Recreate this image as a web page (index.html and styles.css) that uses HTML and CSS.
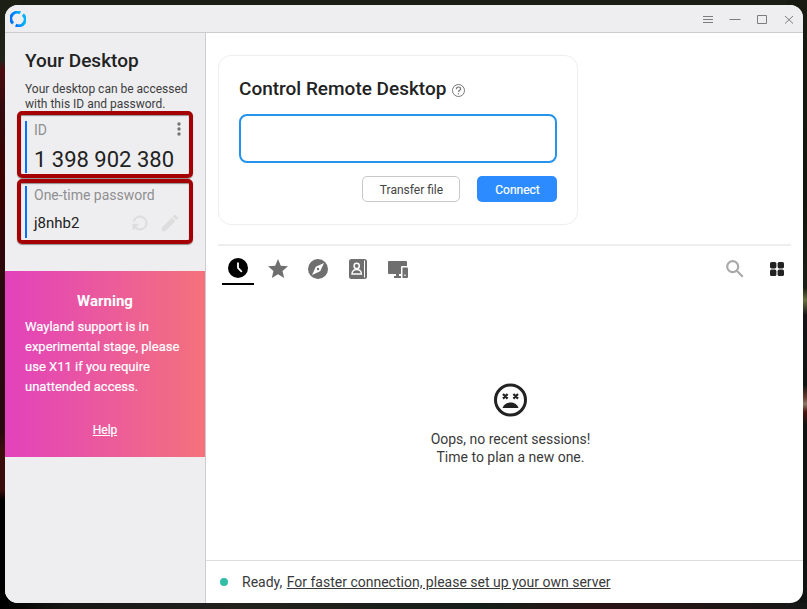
FILE: index.html
```html
<!DOCTYPE html>
<html lang="en">
<head>
<meta charset="utf-8">
<title>RustDesk</title>
<link rel="stylesheet" href="styles.css">
</head>
<body>
<div class="window">
  <header class="titlebar">
    <svg class="logo" width="16" height="16" viewBox="0 0 18 18" fill="none" stroke-width="3.4">
      <defs><linearGradient id="lg" x1="0" y1="0" x2="1" y2="0"><stop offset="0" stop-color="#0071ff"/><stop offset="1" stop-color="#00b8fa"/></linearGradient></defs>
      <path d="M3.500 14A7.200 7.200 0 0 1 11.600 2.200" stroke="url(#lg)"/>
      <path d="M14.500 4A7.200 7.200 0 0 1 6.400 15.800" stroke="url(#lg)"/>
    </svg>
    <nav class="controls">
      <svg viewBox="0 0 12 12"><path d="M1 2.500h10M1 5.500h10M1 8.500h10"/></svg>
      <svg viewBox="0 0 12 12"><path d="M.5 5.500h11"/></svg>
      <svg viewBox="0 0 12 12"><path d="M1.500 1.500h9v8h-9z"/></svg>
      <svg viewBox="0 0 12 12"><path d="M2 2l8 7.500M10 2l-8 7.500"/></svg>
    </nav>
  </header>
  <div class="body">
    <aside class="sidebar">
      <h1>Your Desktop</h1>
      <p class="intro">Your desktop can be accessed<br>with this ID and password.</p>
      <section class="box id-box">
        <div class="field">
          <div class="label">ID</div>
          <div class="id">1 398 902 380</div>
        </div>
        <svg class="dots" width="4" height="14" viewBox="0 0 4 14" fill="#747476"><circle cx="2" cy="2" r="1.700"/><circle cx="2" cy="7" r="1.700"/><circle cx="2" cy="12" r="1.700"/></svg>
      </section>
      <section class="box pw-box">
        <div class="field">
          <div class="label">One-time password</div>
          <div class="pw"><span>j8nhb2</span>
            <svg width="22" height="22" viewBox="0 0 24 24"><path fill="#ddd" stroke="#ddd" stroke-width=".4" transform="rotate(180 12 12)" d="M17.650 6.350A7.960 7.960 0 0 0 12 4a8 8 0 1 0 7.730 10h-2.080A6 6 0 1 1 12 6c1.660 0 3.140.690 4.220 1.780L13 11h7V4z"/></svg>
            <svg width="22" height="22" viewBox="0 0 24 24"><path fill="#ddd" d="M3 17.250V21h3.750L17.810 9.940l-3.750-3.750zM20.710 7.040a1 1 0 0 0 0-1.410l-2.340-2.340a1 1 0 0 0-1.410 0l-1.830 1.830 3.750 3.750z"/></svg>
          </div>
        </div>
      </section>
      <section class="warning">
        <h2>Warning</h2>
        <p>Wayland support is in<br>experimental stage, please<br>use X11 if you require<br>unattended access.</p>
        <a>Help</a>
      </section>
    </aside>
    <main>
      <section class="card">
        <h1>Control Remote Desktop
          <svg width="15" height="15" viewBox="0 0 15 15" fill="none" stroke="#777"><circle cx="7.500" cy="7.500" r="6"/><path stroke-width="1.200" d="M5.400 6.200C5.400 3.200 9.600 3.400 9.600 5.900C9.600 7.300 7.500 7.400 7.500 9M7.500 10.200v1.300"/></svg>
        </h1>
        <div class="input"></div>
        <div class="actions"><span class="btn transfer">Transfer file</span><span class="btn connect">Connect</span></div>
      </section>
      <div class="tabs">
        <div class="tab active"><svg width="20" height="20" viewBox="0 0 20 20"><circle cx="10" cy="10" r="10"/><path d="M10 4.500V10l3.800 3.800" fill="none" stroke="#fff" stroke-width="1.800"/></svg></div>
        <div class="tab"><svg width="24" height="24" viewBox="0 0 24 24"><path d="M12 17.270L18.180 21l-1.640-7.030L22 9.240l-7.190-.610L12 2 9.190 8.630 2 9.240l5.460 4.730L5.820 21z"/></svg></div>
        <div class="tab"><svg width="24" height="24" viewBox="0 0 24 24"><circle cx="12" cy="12" r="10"/><path fill="#fff" d="M18 6l-3.800 8.200L6 18l3.800-8.200z"/><circle cx="12" cy="12" r="1.200"/></svg></div>
        <div class="tab"><svg width="20" height="20" viewBox="0 0 20 20"><rect x="1" y="0" width="18" height="20" rx="2.500"/><path d="M16.500 1.500v17" stroke="#fff" stroke-width="1"/><g fill="none" stroke="#fff" stroke-width="1.500"><circle cx="8.700" cy="6.900" r="2.600"/><path d="M4 15c0-6 9.400-6 9.400 0z"/></g></svg></div>
        <div class="tab"><svg width="22" height="20" viewBox="0 0 22 20"><path d="M2 2h17a1 1 0 0 1 1 1v4h-5a1 1 0 0 0-1 1v7H2a1 1 0 0 1-1-1V3a1 1 0 0 1 1-1zM9 15h3v2h2v2H7v-2h2z"/><path d="M15.500 8.500H20a1 1 0 0 1 1 1V18a1 1 0 0 1-1 1h-4.500z"/><circle cx="18" cy="16.300" r=".8" fill="#fff"/></svg></div>
        <div class="tools">
          <svg width="18" height="18" viewBox="0 0 18 18" fill="none" stroke="#aaa" stroke-width="2.200"><circle cx="6.700" cy="6.700" r="5.500"/><path d="M10.800 10.800l6 6"/></svg>
          <svg width="14" height="14" viewBox="0 0 14 14" fill="#222"><rect width="6.400" height="6.400" rx="1.600"/><rect x="7.600" width="6.400" height="6.400" rx="1.600"/><rect y="7.600" width="6.400" height="6.400" rx="1.600"/><rect x="7.600" y="7.600" width="6.400" height="6.400" rx="1.600"/></svg>
        </div>
      </div>
      <div class="empty">
        <svg width="34" height="34" viewBox="0 0 34 34" fill="none" stroke="#222"><circle cx="16.500" cy="17" r="15" stroke-width="3"/><path stroke-width="2.200" d="M9 11l4.600 4.600M13.600 11l-4.600 4.600M19.400 11l4.600 4.600M24 11l-4.600 4.600"/><path fill="#222" stroke="none" d="M8.500 25c2.200-7.300 13.800-7.300 16 0z"/></svg>
        <p>Oops, no recent sessions!<br>Time to plan a new one.</p>
      </div>
      <footer><i class="dot"></i><span>Ready, <u>For faster connection, please set up your own server</u></span></footer>
    </main>
  </div>
</div>
</body>
</html>
```
FILE: styles.css
```css
* { box-sizing: border-box; }
body {
  margin: 0;
  height: 609px;
  padding: 5px 4px 6px 5px;
  overflow: hidden;
  font-family: Roboto, sans-serif;
  color: #222;
  background:
    linear-gradient(90deg, #000 0, #171612 8%, #22211d 30%, #151d18 60%, #291314 75%, #171717 100%) 0 100% / 100% 6px no-repeat,
    linear-gradient(#1c1f14 0, #20231a 60px, #4b0b10 70px, #330b0d 110px, #3c0000 180px, #2a090c 280px, #26080b 430px, #3a0c0c 450px, #3a0c0c 490px, #000 500px) 0 0 / 20px 100% no-repeat,
    linear-gradient(#171b12 0, #12150d 200px, #1b1f13 288px, #6a7040 300px, #171317 315px, #101312 385px, #6a3c30 398px, #8a7868 404px, #4a1410 412px, #101312 425px, #101312 609px) 100% 0 / 20px 100% no-repeat,
    #1b1e15;
}
h1, h2, p { margin: 0; }
svg { display: block; flex: none; }
.window { height: 598px; border-radius: 13px; overflow: hidden; background: #fff; display: flex; flex-direction: column; }
.titlebar { height: 28px; flex: none; background: #eeeef0; border-bottom: 1px solid #cdcdcf; display: flex; justify-content: space-between; align-items: center; padding: 0 8px 0 5px; }
.controls { display: flex; gap: 15px; padding-top: 2px; }
.controls svg { width: 12px; height: 12px; fill: none; stroke: #7c7c7e; stroke-width: 1; }
.body { display: flex; flex: 1; min-height: 0; }
.sidebar { width: 201px; flex: none; background: #eeeef0; border-right: 1px solid #cdcdcf; }
.sidebar > h1 { font-size: 19px; line-height: 24px; font-weight: 500; padding: 16px 0 0 20px; }
.intro { font-size: 12px; line-height: 15px; padding: 9px 0 0 20px; margin-bottom: -1px; color: #3d3d3f; white-space: nowrap; }
.box { margin-left: 12px; width: 176px; border: 4px solid #a50003; border-radius: 5px; padding: 6px 4px 0; display: flex; justify-content: space-between; box-shadow: 0 1px 1px #0006, inset 0 1px 1px #0006; }
.id-box { height: 67px; }
.pw-box { height: 65px; margin-top: 1px; padding-top: 3px; }
.field { flex: 1; height: 52px; border-left: 2px solid #0071ff; padding-left: 7px; white-space: nowrap; }
.label { font-size: 14px; line-height: 18px; color: #8f8f91; }
.id { font-size: 22px; line-height: 26px; margin-top: 8px; }
.dots { margin: 1px 4px 0 0; }
.pw { display: flex; align-items: center; font-size: 15px; height: 22px; margin-top: 8px; }
.pw span { width: 95px; }
.pw svg + svg { margin-left: 8px; }
.warning { margin-top: 27px; height: 186px; width: 200px; padding: 20px; background: linear-gradient(90deg, #e242bc, #f4727c); color: #fff; }
.warning h2 { text-align: center; font-size: 15px; line-height: 20px; font-weight: 700; }
.warning p { font-size: 13px; line-height: 20px; margin-top: 6px; white-space: nowrap; -webkit-text-stroke: .2px #fff; }
.warning a { display: block; text-align: center; text-decoration: underline; font-size: 12px; line-height: 16px; margin-top: 25px; -webkit-text-stroke: .2px #fff; }
main { flex: 1; display: flex; flex-direction: column; }
.card { width: 360px; height: 170px; margin: 22px 0 0 12px; border: 1px solid #eee; border-radius: 13px; padding: 20px; }
.card h1 { font-size: 19px; line-height: 26px; font-weight: 500; display: flex; align-items: center; gap: 5px; }
.card h1 svg { margin-top: 2px; }
.input { height: 49px; border: 2px solid #2593ec; border-radius: 8px; margin-top: 12px; }
.actions { display: flex; justify-content: flex-end; gap: 17px; margin-top: 13px; }
.btn { height: 26px; line-height: 26px; border-radius: 5px; font-size: 12px; text-align: center; padding-left: 1px; }
.transfer { width: 98px; border: 1px solid #c8c8c8; color: #444; }
.connect { width: 80px; background: #2c8cff; color: #fff; line-height: 28px; -webkit-text-stroke: .2px #fff; }
.tabs { margin: 19px 12px 0; height: 42px; border-top: 2px solid #eee; display: flex; padding: 7px 7px 0 4px; gap: 8px; }
.tab { width: 32px; height: 32px; display: flex; justify-content: center; align-items: center; border-bottom: 2px solid transparent; fill: #6f6f6f; }
.tab + .tab { padding-top: 1px; }
.active { border-color: #000; fill: #000; }
.tools { margin-left: auto; display: flex; align-items: center; gap: 26px; height: 32px; }
.empty { flex: 1; display: flex; flex-direction: column; align-items: center; padding: 97px 0 0 12px; font-size: 14px; line-height: 18px; text-align: center; }
.empty p { margin-top: 13px; color: #3a3a3a; }
footer { height: 43px; flex: none; border-top: 1px solid #dcdcdc; display: flex; align-items: center; padding-left: 14px; font-size: 14px; color: #3a3a3a; }
.dot { width: 8px; height: 8px; border-radius: 50%; background: #32bea6; margin-right: 14px; }
u { text-underline-offset: 1px; margin-left: 1px; }
```
